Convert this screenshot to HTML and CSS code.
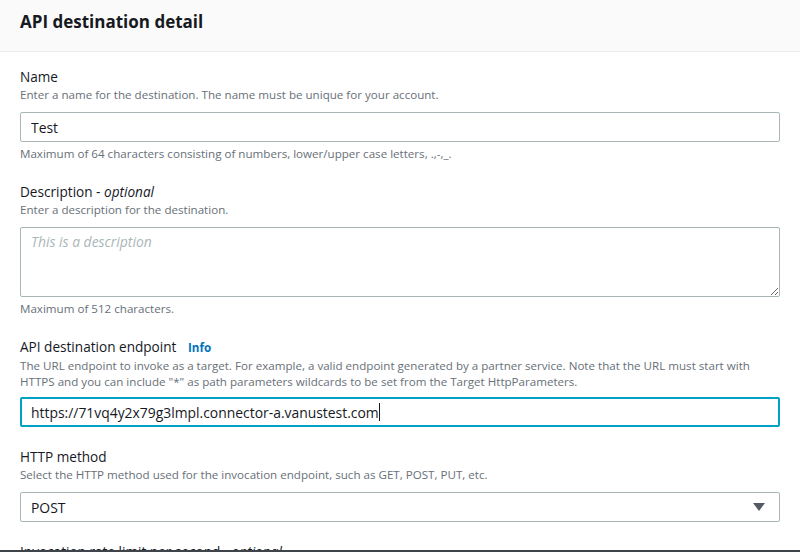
FILE: index.html
```html
<!DOCTYPE html>
<html>
<head>
<meta charset="utf-8">
<link rel="stylesheet" href="styles.css">
</head>
<body>
<div class="page">
  <div class="header"><h2 class="title">API destination detail</h2></div>
  <div class="content">
    <div class="field">
      <div class="label">Name</div>
      <div class="hint">Enter a name for the destination. The name must be unique for your account.</div>
      <input class="input" type="text" value="Test">
      <div class="constraint">Maximum of 64 characters consisting of numbers, lower/upper case letters, .,-,_.</div>
    </div>
    <div class="field">
      <div class="label">Description - <i>optional</i></div>
      <div class="hint">Enter a description for the destination.</div>
      <textarea class="input textarea" placeholder="This is a description"></textarea>
      <div class="constraint">Maximum of 512 characters.</div>
    </div>
    <div class="field">
      <div class="label">API destination endpoint <a class="info">Info</a></div>
      <div class="hint">The URL endpoint to invoke as a target. For example, a valid endpoint generated by a partner service. Note that the URL must start with HTTPS and you can include "*" as path parameters wildcards to be set from the Target HttpParameters.</div>
      <div class="input focused"><span>https://71vq4y2x79g3lmpl.connector-a.vanustest.com</span><span class="caret"></span></div>
    </div>
    <div class="field">
      <div class="label">HTTP method</div>
      <div class="hint">Select the HTTP method used for the invocation endpoint, such as GET, POST, PUT, etc.</div>
      <div class="input select"><span>POST</span><svg width="12" height="8" viewBox="0 0 12 8"><path d="M0 0H12L6 8Z" fill="#545b64"/></svg></div>
    </div>
    <div class="field">
      <div class="label">Invocation rate limit per second - <i>optional</i></div>
    </div>
  </div>
</div>
</body>
</html>
```
FILE: styles.css
```css
* { box-sizing: border-box; }
body { margin: 0; background: #fff; font-family: "Open Sans", "Noto Sans", sans-serif; color: #16191f; }
.page { height: 552px; overflow: hidden; border-bottom: 2px solid #3f444b; }
.header { background: #fafafa; border-bottom: 1px solid #eaeded; height: 52px; padding: 11px 20px 0; }
.title { margin: 0; font-size: 17px; font-weight: 700; line-height: 22px; }
.content { padding: 15px 20px 0; }
.field { margin-bottom: 20px; }
.label { font-size: 13.6px; line-height: 20px; }
.info { color: #0073bb; font-weight: 700; font-size: 11.6px; margin-left: 8px; }
.hint { font-size: 11.6px; line-height: 16px; color: #687078; }
.constraint { font-size: 11.6px; line-height: 16px; color: #687078; margin-top: 4px; }
.input { display: flex; align-items: center; width: 100%; height: 30px; margin-top: 9px; border: 1px solid #aab7b8; border-radius: 2px; padding: 0 10px; font-family: inherit; font-size: 13.9px; color: #16191f; background: #fff; }
.textarea { height: 70px; display: block; padding: 4px 10px; resize: vertical; }
.textarea::placeholder { color: #aab7b8; font-style: italic; }
.focused { border: 2px solid #00a1c9; padding-left: 9px; margin-top: 7px; }
.caret { display: inline-block; width: 1px; height: 18px; background: #16191f; }
.select { justify-content: space-between; padding-right: 14px; }
```
